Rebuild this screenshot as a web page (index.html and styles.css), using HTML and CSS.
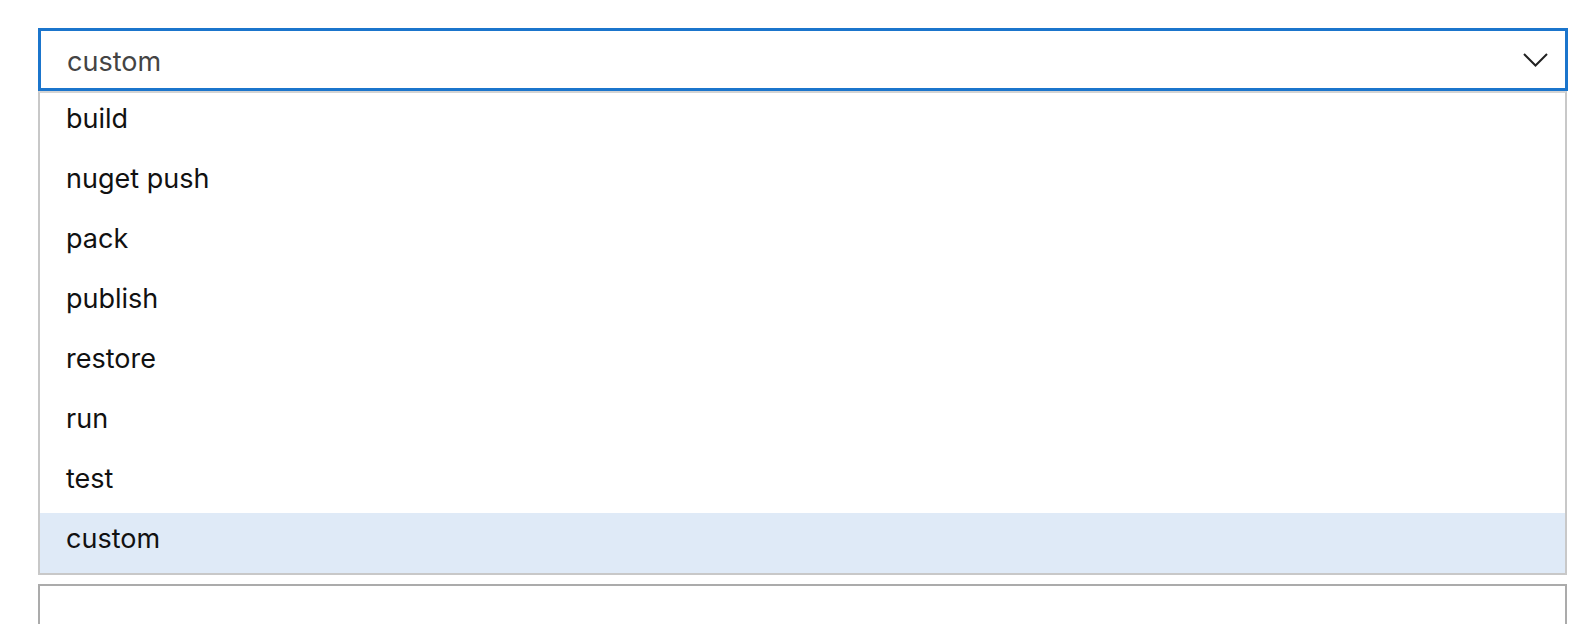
FILE: index.html
```html
<!DOCTYPE html>
<html>
<head>
<meta charset="utf-8">
<link rel="stylesheet" href="styles.css">
</head>
<body>
<div class="page">
  <div class="select">
    <span class="select-value">custom</span>
    <svg class="chevron" width="25" height="14" viewBox="0 0 25 14"><polyline points="1,1 12.5,12.5 24,1" fill="none" stroke="#222" stroke-width="2"/></svg>
  </div>
  <ul class="options">
    <li class="option">build</li>
    <li class="option">nuget push</li>
    <li class="option">pack</li>
    <li class="option">publish</li>
    <li class="option">restore</li>
    <li class="option">run</li>
    <li class="option">test</li>
    <li class="option selected">custom</li>
  </ul>
  <div class="textbox"></div>
</div>
</body>
</html>
```
FILE: styles.css
```css
html, body {
  margin: 0;
  padding: 0;
  background: #fff;
  font-family: Inter, "Noto Sans", sans-serif;
}
.page {
  padding: 28px 12px 0 38px;
  height: 624px;
  box-sizing: border-box;
  overflow: hidden;
}
.select {
  height: 63px;
  box-sizing: border-box;
  border: 3px solid #1b75cc;
  display: flex;
  align-items: center;
  justify-content: space-between;
  padding: 0 17px 0 26px;
}
.select-value {
  align-self: flex-start;
  margin-top: 11px;
  font-size: 27px;
  line-height: 40px;
  color: #444;
}
.chevron {
  display: block;
  margin-top: 1px;
}
.options {
  list-style: none;
  margin: 0 1px 0 0;
  padding: 0;
  border: 2px solid #c8c8c8;
  border-top-width: 2px;
  border-top-color: #d4d4d4;
}
.option {
  height: 60px;
  box-sizing: border-box;
  padding: 1px 0 9px 26px;
  font-size: 27px;
  line-height: 50px;
  color: #111;
}
.option.selected {
  background: #dfeaf7;
}
.textbox {
  margin-top: 9px;
  margin-right: 1px;
  height: 80px;
  border: 2px solid #ababab;
}
```
